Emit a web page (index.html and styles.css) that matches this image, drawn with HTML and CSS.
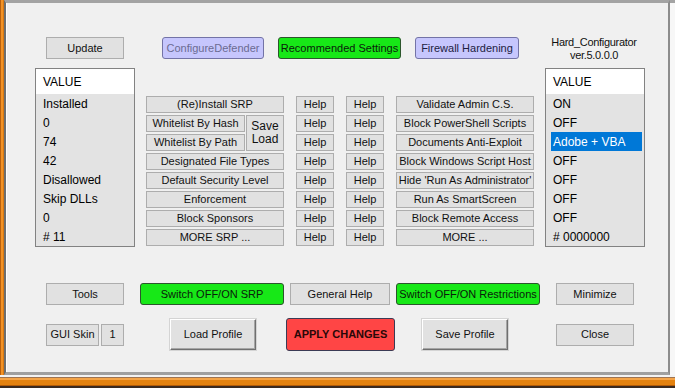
FILE: index.html
```html
<!DOCTYPE html>
<html lang="en">
<head>
    <meta charset="UTF-8">
    <title>Hard_Configurator</title>
    <link rel="stylesheet" href="styles.css">
</head>
<body>

    <div class="screen">
        <div class="upper">
            <div class="edge-left"></div>

            <!-- Main window -->
            <div class="window">

                <!-- Top buttons -->
                <div class="row-top">
                    <button class="btn btn-update">Update</button>
                    <button class="btn btn-blue btn-defender">ConfigureDefender</button>
                    <button class="btn btn-green btn-recommended">Recommended Settings</button>
                    <button class="btn btn-blue btn-firewall">Firewall Hardening</button>
                    <div class="app-title">Hard_Configurator<br>ver.5.0.0.0</div>
                </div>

                <!-- Lists and settings -->
                <div class="row-main">
                    <div class="value-list">
                        <div class="list-head">VALUE</div>
                        <div class="list-item">Installed</div>
                        <div class="list-item">0</div>
                        <div class="list-item">74</div>
                        <div class="list-item">42</div>
                        <div class="list-item">Disallowed</div>
                        <div class="list-item">Skip DLLs</div>
                        <div class="list-item">0</div>
                        <div class="list-item"># 11</div>
                    </div>

                    <div class="actions">
                        <button class="btn">(Re)Install SRP</button>
                        <button class="btn">Help</button>
                        <button class="btn">Help</button>
                        <button class="btn">Validate Admin C.S.</button>

                        <div class="whitelist">
                            <button class="btn">Whitelist By Hash</button>
                            <button class="btn btn-saveload">Save<br>Load</button>
                            <button class="btn">Whitelist By Path</button>
                        </div>
                        <button class="btn">Help</button>
                        <button class="btn">Help</button>
                        <button class="btn">Block PowerShell Scripts</button>
                        <button class="btn">Help</button>
                        <button class="btn">Help</button>
                        <button class="btn">Documents Anti-Exploit</button>

                        <button class="btn">Designated File Types</button>
                        <button class="btn">Help</button>
                        <button class="btn">Help</button>
                        <button class="btn">Block Windows Script Host</button>

                        <button class="btn">Default Security Level</button>
                        <button class="btn">Help</button>
                        <button class="btn">Help</button>
                        <button class="btn">Hide 'Run As Administrator'</button>

                        <button class="btn">Enforcement</button>
                        <button class="btn">Help</button>
                        <button class="btn">Help</button>
                        <button class="btn">Run As SmartScreen</button>

                        <button class="btn">Block Sponsors</button>
                        <button class="btn">Help</button>
                        <button class="btn">Help</button>
                        <button class="btn">Block Remote Access</button>

                        <button class="btn">MORE SRP ...</button>
                        <button class="btn">Help</button>
                        <button class="btn">Help</button>
                        <button class="btn">MORE ...</button>
                    </div>

                    <div class="value-list">
                        <div class="list-head">VALUE</div>
                        <div class="list-item">ON</div>
                        <div class="list-item">OFF</div>
                        <div class="list-item selected">Adobe + VBA</div>
                        <div class="list-item">OFF</div>
                        <div class="list-item">OFF</div>
                        <div class="list-item">OFF</div>
                        <div class="list-item">OFF</div>
                        <div class="list-item"># 0000000</div>
                    </div>
                </div>

                <!-- Switches -->
                <div class="row-switch">
                    <button class="btn btn-tools">Tools</button>
                    <button class="btn btn-green btn-srp">Switch OFF/ON SRP</button>
                    <button class="btn btn-general">General Help</button>
                    <button class="btn btn-green btn-restrictions">Switch OFF/ON Restrictions</button>
                    <button class="btn btn-minimize">Minimize</button>
                </div>

                <!-- Profiles -->
                <div class="row-profile">
                    <button class="btn btn-skin">GUI Skin</button>
                    <button class="btn btn-skin-num">1</button>
                    <button class="btn btn-raised btn-load">Load Profile</button>
                    <button class="btn btn-apply">APPLY CHANGES</button>
                    <button class="btn btn-raised btn-save">Save Profile</button>
                    <button class="btn btn-close">Close</button>
                </div>
            </div>

            <div class="edge-right"></div>
        </div>
        <div class="edge-bottom"></div>
    </div>

</body>
</html>
```

FILE: styles.css
```css
/* General Styles */
body {
    margin: 0;
    padding: 0;
    font-family: "Liberation Sans", Arial, sans-serif;
    background-color: #f4f4f4;
}

.screen {
    width: 675px;
    height: 388px;
    display: flex;
    flex-direction: column;
    overflow: hidden;
}

.upper {
    display: flex;
    height: 375px;
}

.edge-left {
    width: 4px;
    background: linear-gradient(to right, #b8600e 0 1px, #f29226 1px 3px, #d9780f 3px 4px);
}

.edge-right {
    flex: 1;
    background-color: #f7f7f7;
    border-top: 3px solid #a3a3a3;
}

.edge-bottom {
    height: 13px;
    background: linear-gradient(to bottom, #f3f3f3 0 2px, #a07450 2px 3px, #f4a448 3px 5px, #e4820f 5px 10px, #b25b08 10px 11px, #3a2a20 11px 13px);
}

/* Window */
.window {
    width: 666px;
    box-sizing: border-box;
    background-color: #f0f0f0;
    border-left: 2px solid #6e6e6e;
    border-top: 3px solid #a3a3a3;
    border-right: 2px solid #8c8c8c;
    border-bottom: 3px solid #a0a0a0;
    box-shadow: inset 1px 0 #ffffff;
}

/* Buttons */
.btn {
    box-sizing: border-box;
    margin: 0;
    padding: 0;
    font-family: "Liberation Sans", Arial, sans-serif;
    font-size: 11px;
    line-height: 13px;
    color: #111;
    background-color: #e1e1e1;
    border: 1px solid #adadad;
    white-space: nowrap;
    text-align: center;
    cursor: pointer;
}

.btn-blue {
    background-color: #c6c6fd;
    border-color: #7373a6;
    border-radius: 3px;
}

.btn-green {
    background-color: #17e817;
    border-color: #2c552c;
    border-radius: 3px;
    color: #0a200a;
}

.btn-raised {
    border: 1px solid;
    border-color: #ffffff #6f6f6f #6f6f6f #ffffff;
    box-shadow: inset -1px -1px #a5a5a5, 0 0 0 1px #d4d4d4;
}

/* Top row */
.row-top {
    display: flex;
    align-items: flex-start;
    height: 22px;
    margin-top: 34px;
    padding-left: 40px;
}

.row-top .btn {
    height: 22px;
}

.btn-update {
    width: 78px;
}

.btn-defender {
    width: 102px;
    margin-left: 38px;
    color: #6b6b92;
}

.btn-recommended {
    width: 123px;
    margin-left: 14px;
}

.btn-firewall {
    width: 104px;
    margin-left: 14px;
    color: #1d1d3f;
}

.app-title {
    width: 100px;
    margin-left: 25px;
    margin-top: -1px;
    font-size: 11px;
    line-height: 13px;
    letter-spacing: -0.3px;
    text-align: center;
    color: #111;
}

/* Lists and settings */
.row-main {
    display: flex;
    align-items: flex-start;
    gap: 11px;
    margin-top: 9px;
    padding-left: 29px;
}

.value-list {
    width: 100px;
    height: 179px;
    box-sizing: border-box;
    border: 1px solid #828282;
    background-color: #e3e3e3;
    font-size: 12px;
    color: #000;
}

.list-head {
    height: 25px;
    line-height: 27px;
    padding-left: 7px;
    background-color: #fff;
}

.list-item {
    height: 19px;
    line-height: 20px;
    padding-left: 7px;
    white-space: nowrap;
}

.list-item.selected {
    margin: 0 2px 0 5px;
    padding-left: 2px;
    background-color: #0078d7;
    color: #fff;
}

.actions {
    display: grid;
    grid-template-columns: 138px 38px 38px 138px;
    grid-auto-rows: 17px;
    column-gap: 12px;
    row-gap: 2px;
    width: 388px;
    margin-top: 28px;
}

.whitelist {
    grid-row: span 2;
    display: grid;
    grid-template-columns: 99px 38px;
    grid-template-rows: 17px 17px;
    column-gap: 1px;
    row-gap: 2px;
}

.btn-saveload {
    grid-column: 2;
    grid-row: 1 / span 2;
    font-size: 12px;
}

/* Switch row */
.row-switch {
    display: flex;
    height: 22px;
    margin-top: 36px;
    padding-left: 40px;
}

.row-switch .btn {
    height: 22px;
}

.btn-tools {
    width: 78px;
}

.btn-srp {
    width: 144px;
    margin-left: 16px;
}

.btn-general {
    width: 100px;
    margin-left: 6px;
}

.btn-restrictions {
    width: 144px;
    margin-left: 6px;
}

.btn-minimize {
    width: 78px;
    margin-left: 16px;
}

/* Profile row */
.row-profile {
    display: flex;
    align-items: center;
    height: 33px;
    margin-top: 13px;
    padding-left: 40px;
}

.btn-skin {
    width: 53px;
    height: 22px;
}

.btn-skin-num {
    width: 23px;
    height: 22px;
    margin-left: 2px;
}

.btn-load {
    width: 86px;
    height: 31px;
    margin-left: 46px;
}

.btn-apply {
    width: 109px;
    height: 33px;
    margin-left: 30px;
    background-color: #ff4545;
    border-color: #3b3b55;
    border-radius: 3px;
    font-weight: bold;
    color: #2a0808;
}

.btn-save {
    width: 86px;
    height: 31px;
    margin-left: 27px;
}

.btn-close {
    width: 78px;
    height: 22px;
    margin-left: 48px;
}
```
